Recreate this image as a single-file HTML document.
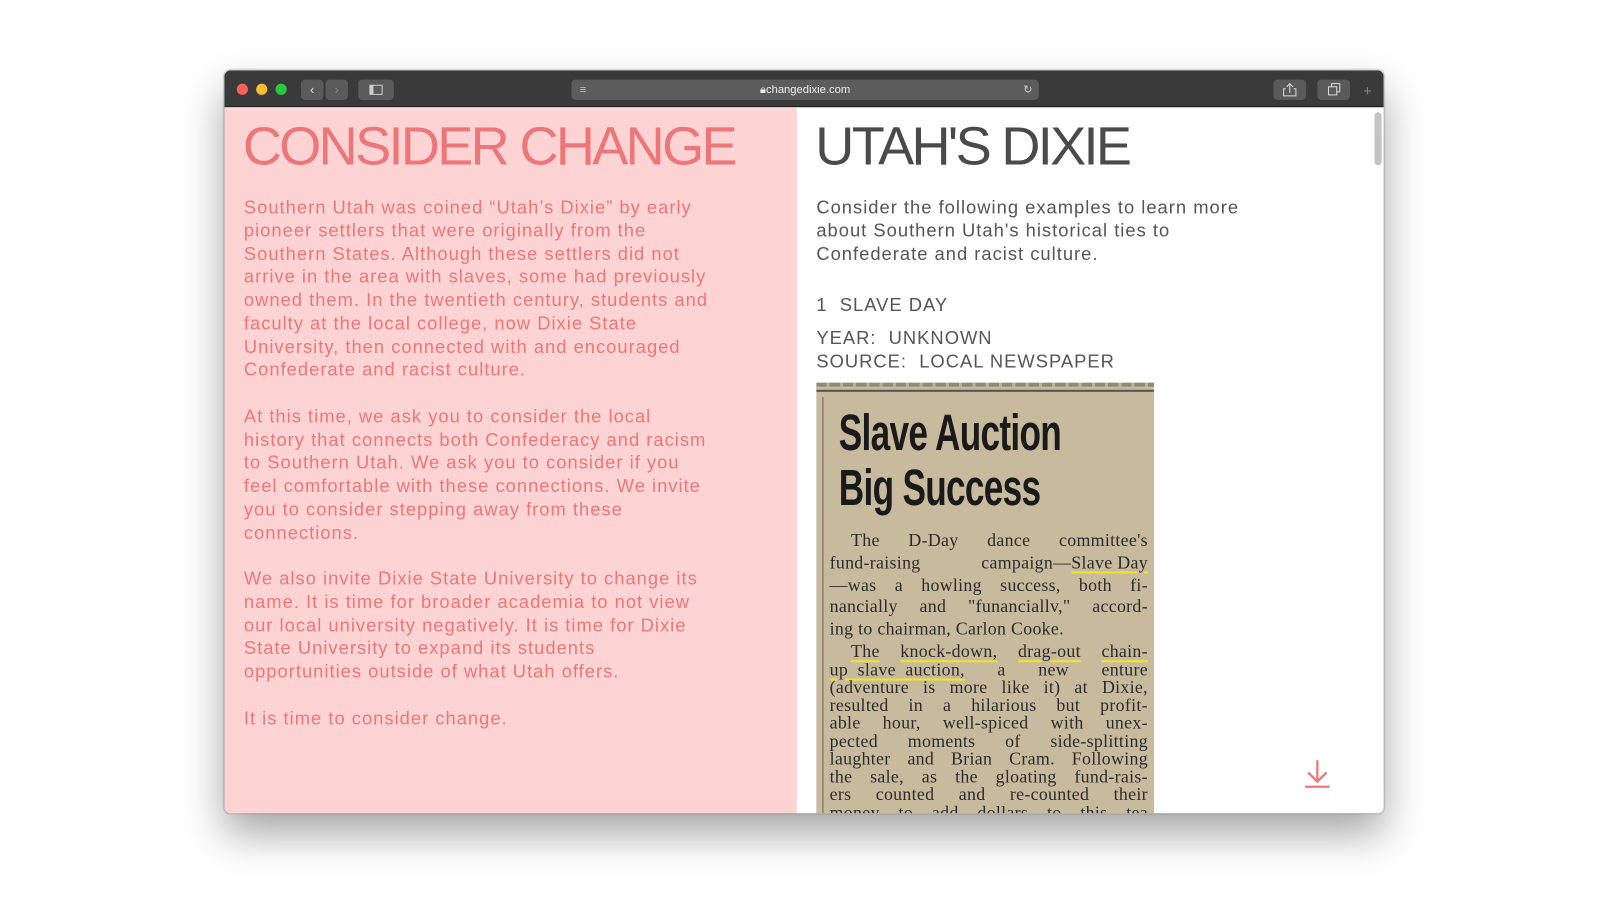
<!DOCTYPE html>
<html><head><meta charset="utf-8"><style>
*{margin:0;padding:0;box-sizing:border-box}
body{width:1600px;height:902px;background:#fff;position:relative;overflow:hidden;font-family:"Liberation Sans",sans-serif}
#wrap{position:absolute;left:0;top:0;width:1600px;height:902px;transform:scale(1.0204);transform-origin:0 0}
.win{position:absolute;left:220px;top:69px;width:1136px;height:728px;border-radius:6px;overflow:hidden;box-shadow:0 20px 40px rgba(0,0,0,.35),0 0 2px rgba(0,0,0,.4);background:#fff}
.bar{position:absolute;left:0;top:0;width:100%;height:36px;background:#3a3a3a;border-bottom:1px solid #1e1e1e}
.dot{position:absolute;top:13px;width:11px;height:11px;border-radius:50%}
.btn{position:absolute;top:9px;height:20px;background:#5a5a5a;border-radius:4px}
.url{position:absolute;left:340px;top:9px;width:458px;height:20px;background:#5c5c5c;border-radius:4px;color:#eee;font-size:11px;text-align:center;line-height:20px}
.left{position:absolute;left:0;top:37px;width:561px;height:691px;background:#fdd3d4;color:#ec777a}
.right{position:absolute;left:561px;top:37px;width:575px;height:691px;background:#fff;color:#555}
h1{font-weight:normal;font-size:53px;letter-spacing:-2.6px;position:absolute;top:7px;line-height:62px}
.txt{position:absolute;font-size:18px;line-height:22.75px;letter-spacing:.98px}
.txt p{margin-bottom:22.75px}
.news{position:absolute;left:19px;top:269px;width:331px;height:422px;background:#c8bb9d;font-family:"Liberation Serif",serif;color:#2a2a2a;overflow:hidden}
.nl{position:absolute;left:13px;width:312px;font-size:17.5px;white-space:nowrap;display:flex;justify-content:space-between;letter-spacing:.3px}
.u{text-decoration:underline;text-decoration-color:#f0e52a;text-decoration-thickness:2px;text-underline-offset:3px}
</style></head><body>
<div id="wrap">
<div class="win">
<div class="bar">
<div class="dot" style="left:12px;background:#fe5f57"></div>
<div class="dot" style="left:31px;background:#febc2e"></div>
<div class="dot" style="left:50px;background:#28c840"></div>
<div class="btn" style="left:75px;width:22px;color:#ddd;font-size:13px;text-align:center;line-height:20px">‹</div>
<div class="btn" style="left:99px;width:22px;color:#888;font-size:13px;text-align:center;line-height:20px">›</div>
<div class="btn" style="left:131px;width:35px"><div style="margin:5px 11px;width:13px;height:10px;border:1px solid #ccc;border-left-width:4px"></div></div>
<div class="url"><span style="position:absolute;left:8px;top:0;color:#ccc">≡</span>🔒︎changedixie.com<span style="position:absolute;right:6px;color:#ccc">↻</span></div>
<div class="btn" style="left:1028px;width:32px"><svg width="32" height="20"><path d="M12 9h-2v7h12V9h-2M16 13V4M13 7l3-3 3 3" stroke="#ddd" fill="none"/></svg></div>
<div class="btn" style="left:1071px;width:32px"><svg width="32" height="20"><rect x="11" y="7" width="8" height="8" stroke="#ddd" fill="none"/><path d="M14 7V4h8v8h-3" stroke="#ddd" fill="none"/></svg></div>
<div style="position:absolute;left:1116px;top:12px;color:#888;font-size:14px">+</div>
</div>
<div class="left">
<h1 style="left:18px">CONSIDER CHANGE</h1>
<div class="txt" style="left:19px;top:86px;width:458px">
<p>Southern Utah was coined “Utah’s Dixie” by early pioneer settlers that were originally from the Southern States. Although these settlers did not arrive in the area with slaves, some had previously owned them. In the twentieth century, students and faculty at the local college, now Dixie State University, then connected with and encouraged Confederate and racist culture.</p>
<p>At this time, we ask you to consider the local history that connects both Confederacy and racism to Southern Utah. We ask you to consider if you feel comfortable with these connections. We invite you to consider stepping away from these connections.</p>
<p>We also invite Dixie State University to change its name. It is time for broader academia to not view our local university negatively. It is time for Dixie State University to expand its students opportunities outside of what Utah offers.</p>
<p>It is time to consider change.</p>
</div>
</div>
<div class="right">
<h1 style="left:18px;color:#4a4a4a">UTAH'S DIXIE</h1>
<div class="txt" style="left:19px;top:86px;width:418px">Consider the following examples to learn more about Southern Utah's historical ties to Confederate and racist culture.</div>
<div class="txt" style="left:19px;top:182px">1&nbsp; SLAVE DAY</div>
<div class="txt" style="left:19px;top:214px">YEAR:&nbsp; UNKNOWN<br>SOURCE:&nbsp; LOCAL NEWSPAPER</div>
<div class="news">
<div style="position:absolute;left:0;top:0;width:100%;height:4px;background:repeating-linear-gradient(90deg,#6a6a60 0 10px,#b8ab8d 10px 13px);opacity:.6"></div>
<div style="position:absolute;left:0;top:7px;width:100%;border-top:2px solid #555"></div>
<div style="position:absolute;left:6px;top:14px;height:420px;border-left:1px solid #666"></div>
<div style="position:absolute;left:22px;top:22px;font-family:'Liberation Sans',sans-serif;font-weight:bold;font-size:50px;line-height:54px;transform:scaleX(.69);transform-origin:left;letter-spacing:-1px;color:#1a1a1a;white-space:nowrap">Slave Auction<br>Big Success</div>
<div class="nl" style="top:144px;left:34px;width:291px"><span>The</span><span>D-Day</span><span>dance</span><span>committee's</span></div>
<div class="nl" style="top:166px"><span>fund-raising</span><span>campaign—<span class="u">Slave Day</span></span></div>
<div class="nl" style="top:188px"><span>—was</span><span>a</span><span>howling</span><span>success,</span><span>both</span><span>fi-</span></div>
<div class="nl" style="top:209px"><span>nancially</span><span>and</span><span>"funanciallv,"</span><span>accord-</span></div>
<div class="nl" style="top:231px;justify-content:flex-start"><span>ing to chairman, Carlon Cooke.</span></div>
<div class="nl u" style="top:253px;left:34px;width:291px"><span>The</span><span>knock-down,</span><span>drag-out</span><span>chain-</span></div>
<div class="nl" style="top:271px"><span class="u">up&nbsp; slave&nbsp; auction,</span><span>a</span><span>new</span><span>enture</span></div>
<div class="nl" style="top:288px"><span>(adventure</span><span>is</span><span>more</span><span>like</span><span>it)</span><span>at</span><span>Dixie,</span></div>
<div class="nl" style="top:306px"><span>resulted</span><span>in</span><span>a</span><span>hilarious</span><span>but</span><span>profit-</span></div>
<div class="nl" style="top:323px"><span>able</span><span>hour,</span><span>well-spiced</span><span>with</span><span>unex-</span></div>
<div class="nl" style="top:341px"><span>pected</span><span>moments</span><span>of</span><span>side-splitting</span></div>
<div class="nl" style="top:358px"><span>laughter</span><span>and</span><span>Brian</span><span>Cram.</span><span>Following</span></div>
<div class="nl" style="top:376px"><span>the</span><span>sale,</span><span>as</span><span>the</span><span>gloating</span><span>fund-rais-</span></div>
<div class="nl" style="top:393px"><span>ers</span><span>counted</span><span>and</span><span>re-counted</span><span>their</span></div>
<div class="nl" style="top:411px"><span>money</span><span>to</span><span>add</span><span>dollars</span><span>to</span><span>this</span><span>tea</span></div>
</div>
<svg style="position:absolute;left:495px;top:636px" width="30" height="32" viewBox="0 0 30 32"><path d="M15 3V24M6 15l9 9 9-9M3 29h24" stroke="#ec777a" stroke-width="2.2" fill="none"/></svg>
<div style="position:absolute;right:2px;top:4px;width:7px;height:52px;background:#c4c4c4;border-radius:4px"></div>
</div>
</div>
</div>
</body></html>
